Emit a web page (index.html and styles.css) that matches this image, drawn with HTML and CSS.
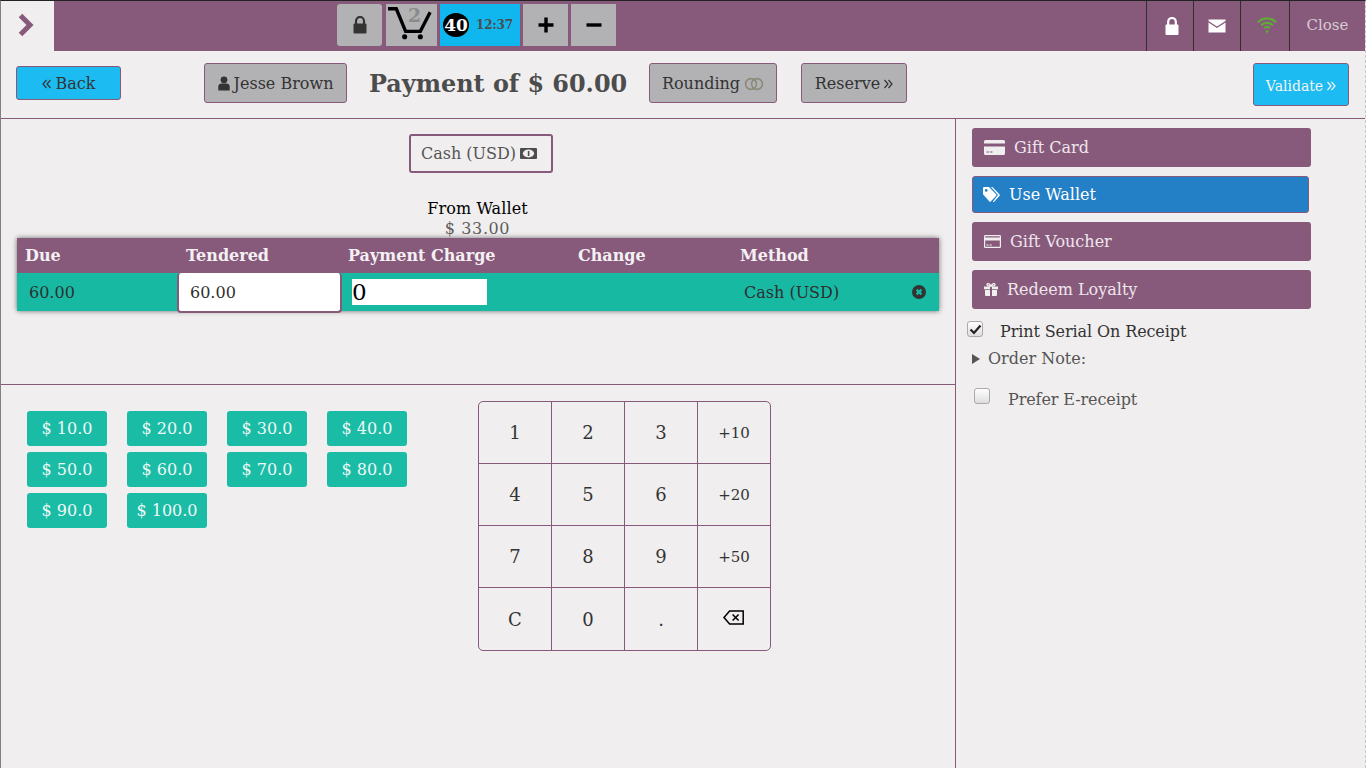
FILE: index.html
```html
<!DOCTYPE html>
<html lang="en">
<head>
<meta charset="UTF-8">
<title>Payment</title>
<link rel="stylesheet" href="styles.css">
</head>
<body>
<div class="screen">

  <!-- top bar -->
  <header class="topbar">
    <div class="menu-toggle">
      <svg width="18" height="26" viewBox="0 0 18 26"><path d="M3.5 3.5 L13 13 L3.5 22.5" fill="none" stroke="#875a7b" stroke-width="5"/></svg>
    </div>
    <div class="tools">
      <div class="tool tool-lock">
        <svg width="14" height="18" viewBox="0 0 14 18"><path d="M3 8V5a4 4 0 0 1 8 0v3" fill="none" stroke="#333" stroke-width="2.2"/><rect x="0.5" y="7.5" width="13" height="10" rx="1.2" fill="#333"/></svg>
      </div>
      <div class="tool tool-cart">
        <svg width="52" height="36" viewBox="0 0 52 36"><path d="M2 4.5H10.5L20 27.5H35L45 8" fill="none" stroke="#000" stroke-width="3.4"/><circle cx="19" cy="33" r="2.6"/><circle cx="35" cy="33" r="2.6"/></svg>
        <span class="cart-count">2</span>
      </div>
      <div class="tool tool-timer">
        <span class="badge">40</span>
        <span class="clock">12:37</span>
      </div>
      <div class="tool tool-step">
        <svg width="16" height="16" viewBox="0 0 16 16"><path d="M0.5 8H15.5M8 0.5V15.5" stroke="#000" stroke-width="3.4"/></svg>
      </div>
      <div class="tool tool-step">
        <svg width="16" height="16" viewBox="0 0 16 16"><path d="M0.5 8H15.5" stroke="#000" stroke-width="3.4"/></svg>
      </div>
    </div>
    <div class="status">
      <div class="status-item status-lock">
        <svg width="14" height="18" viewBox="0 0 14 18"><path d="M3.2 8V4.8a3.8 3.8 0 0 1 7.6 0V8" fill="none" stroke="#fff" stroke-width="2.2"/><rect x="0.5" y="7.5" width="13" height="10.5" rx="1" fill="#fff"/></svg>
      </div>
      <div class="status-item">
        <svg width="18" height="14" viewBox="0 0 18 14"><path d="M0.5 0.5H17.5V2L9 7.5L0.5 2Z" fill="#fff"/><path d="M0.5 3.6L9 9L17.5 3.6V13.5H0.5Z" fill="#fff"/></svg>
      </div>
      <div class="status-item status-wifi">
        <svg width="22" height="18" viewBox="0 0 18 16" fill="none" stroke="#5eab3a" stroke-width="2"><path d="M1 5.5C5.5 1 12.5 1 17 5.5"/><path d="M3.8 8.2C6.8 5.4 11.2 5.4 14.2 8.2"/><path d="M6.5 10.8C8 9.5 10 9.5 11.5 10.8"/><path d="M9 15.5L7.4 13.1C8.4 12.5 9.6 12.5 10.6 13.1Z" fill="#5eab3a" stroke="none"/></svg>
      </div>
      <div class="status-item status-close">Close</div>
    </div>
  </header>

  <!-- action row -->
  <div class="actions">
    <button class="btn btn-blue btn-back">
      <svg class="angles" width="9" height="10" viewBox="0 0 9 10"><path d="M4.5 1L1 5L4.5 9M8.5 1L5 5L8.5 9" fill="none" stroke="#333" stroke-width="1.2"/></svg>Back
    </button>
    <button class="btn btn-grey btn-customer">
      <svg width="12" height="15" viewBox="0 0 12 15"><circle cx="6" cy="3.8" r="3.4" fill="#333"/><path d="M0.3 14.5V10.5C0.3 8.6 1.8 7.4 3.4 7.4H8.6C10.2 7.4 11.7 8.6 11.7 10.5V14.5Z" fill="#333"/></svg>Jesse Brown
    </button>
    <h1 class="title">Payment of $ 60.00</h1>
    <button class="btn btn-grey btn-rounding">Rounding
      <svg width="20" height="14" viewBox="0 0 20 14" fill="none" stroke="#8a8a78" stroke-width="1.6"><circle cx="7" cy="7" r="5.4"/><circle cx="13" cy="7" r="5.4"/></svg>
    </button>
    <button class="btn btn-grey btn-reserve">Reserve
      <svg class="angles-right" width="9" height="10" viewBox="0 0 9 10"><path d="M0.5 1L4 5L0.5 9M4.5 1L8 5L4.5 9" fill="none" stroke="#333" stroke-width="1.2"/></svg>
    </button>
    <button class="btn btn-blue btn-validate">Validate
      <svg class="angles-right" width="9" height="10" viewBox="0 0 9 10"><path d="M0.5 1L4 5L0.5 9M4.5 1L8 5L4.5 9" fill="none" stroke="#f4f4f4" stroke-width="1.2"/></svg>
    </button>
  </div>

  <div class="content">
    <main class="left">
      <section class="lines">
        <div class="method-row">
          <div class="method">Cash (USD)
            <svg width="17" height="11" viewBox="0 0 17 11"><rect width="17" height="11" rx="1" fill="#4d4d4d"/><ellipse cx="8.5" cy="5.5" rx="5.6" ry="3.9" fill="#f0eeee"/><rect x="7.8" y="3" width="1.6" height="5" fill="#4d4d4d"/></svg>
          </div>
        </div>
        <div class="wallet">
          <div class="wallet-label">From Wallet</div>
          <div class="wallet-value">$ 33.00</div>
        </div>
        <div class="paylines">
          <div class="paylines-head">
            <span class="col-due">Due</span>
            <span class="col-tendered">Tendered</span>
            <span class="col-charge">Payment Charge</span>
            <span class="col-change">Change</span>
            <span class="col-method">Method</span>
          </div>
          <div class="paylines-row">
            <span class="cell-due">60.00</span>
            <span class="cell-tendered">60.00</span>
            <span class="cell-charge"><span class="charge-input">0</span></span>
            <span class="cell-change"></span>
            <span class="cell-method">Cash (USD)</span>
            <svg class="remove" width="14" height="14" viewBox="0 0 14 14"><circle cx="7" cy="7" r="7" fill="#333"/><path d="M4.6 4.6L9.4 9.4M9.4 4.6L4.6 9.4" stroke="#17b9a3" stroke-width="2.2"/></svg>
          </div>
        </div>
      </section>

      <section class="pad-area">
        <div class="quick">
          <button class="quick-btn">$ 10.0</button>
          <button class="quick-btn">$ 20.0</button>
          <button class="quick-btn">$ 30.0</button>
          <button class="quick-btn">$ 40.0</button>
          <button class="quick-btn">$ 50.0</button>
          <button class="quick-btn">$ 60.0</button>
          <button class="quick-btn">$ 70.0</button>
          <button class="quick-btn">$ 80.0</button>
          <button class="quick-btn">$ 90.0</button>
          <button class="quick-btn">$ 100.0</button>
        </div>
        <div class="numpad">
          <div class="key">1</div><div class="key">2</div><div class="key">3</div><div class="key key-add">+10</div>
          <div class="key">4</div><div class="key">5</div><div class="key">6</div><div class="key key-add">+20</div>
          <div class="key">7</div><div class="key">8</div><div class="key">9</div><div class="key key-add">+50</div>
          <div class="key">C</div><div class="key">0</div><div class="key">.</div>
          <div class="key">
            <svg class="backspace" width="21" height="15" viewBox="0 0 21 15" fill="none" stroke="#000" stroke-width="1.5"><path d="M20.2 1H6.6L1 7.5L6.6 14H20.2Z"/><path d="M9.6 4.4L15.6 10.6M15.6 4.4L9.6 10.6"/></svg>
          </div>
        </div>
      </section>
    </main>

    <aside class="right">
      <div class="side-btn">
        <svg class="icon-gift" width="21" height="15" viewBox="0 0 21 15"><path d="M1.5 0H19.5A1.5 1.5 0 0 1 21 1.5V3.5H0V1.5A1.5 1.5 0 0 1 1.5 0Z" fill="#f0eeee"/><path d="M0 6.5H21V13.5A1.5 1.5 0 0 1 19.5 15H1.5A1.5 1.5 0 0 1 0 13.5ZM2.5 11.5V12.5H5V11.5ZM6 11.5V12.5H8.5V11.5Z" fill="#f0eeee" fill-rule="evenodd"/></svg>
        Gift Card
      </div>
      <div class="side-btn side-btn-active">
        <svg class="icon-tag" width="17" height="16" viewBox="0 0 17 16"><path d="M0 1.2A1.2 1.2 0 0 1 1.2 0H6L13 7.2A1.2 1.2 0 0 1 13 9L8 14.2A1.2 1.2 0 0 1 6.2 14.2L0 7.2ZM3.2 2A1.4 1.4 0 1 0 3.2 4.8A1.4 1.4 0 1 0 3.2 2Z" fill="#fff" fill-rule="evenodd"/><path d="M8 0H9.4L16.4 7.2A1.2 1.2 0 0 1 16.4 9L11.4 14.4A1.2 1.2 0 0 1 9.8 14.8L15 8.1Z" fill="#fff"/></svg>
        Use Wallet
      </div>
      <div class="side-btn">
        <svg class="icon-voucher" width="17" height="13" viewBox="0 0 17 13"><path d="M1.3 0H15.7A1.3 1.3 0 0 1 17 1.3V11.7A1.3 1.3 0 0 1 15.7 13H1.3A1.3 1.3 0 0 1 0 11.7V1.3A1.3 1.3 0 0 1 1.3 0ZM1.2 1.2V2.6H15.8V1.2ZM1.2 5.4V11.8H15.8V5.4ZM2.4 9.6H4.6V10.6H2.4ZM5.6 9.6H7.8V10.6H5.6Z" fill="#f0eeee" fill-rule="evenodd"/></svg>
        Gift Voucher
      </div>
      <div class="side-btn">
        <svg class="icon-present" width="14" height="13" viewBox="0 0 14 13"><path d="M0 3.4H6V6.2H0ZM8 3.4H14V6.2H8ZM1 7H6V13H2A1 1 0 0 1 1 12ZM8 7H13V12A1 1 0 0 1 12 13H8Z" fill="#f0eeee"/><path d="M7 3C5.5 3 3 3 3 1.5C3 0 5.5 0 7 3C8.5 0 11 0 11 1.5C11 3 8.5 3 7 3Z" fill="none" stroke="#f0eeee" stroke-width="1.3"/></svg>
        Redeem Loyalty
      </div>

      <div class="check-row check-serial">
        <span class="checkbox">
          <svg width="13" height="11" viewBox="0 0 13 11"><path d="M1.5 5.5L5 9L11.5 1.5" fill="none" stroke="#222" stroke-width="2.2"/></svg>
        </span>
        <span class="serial-label">Print Serial On Receipt</span>
      </div>
      <div class="order-note"><span class="caret"></span>Order Note:</div>
      <div class="check-row check-ereceipt">
        <span class="checkbox"></span>
        <span class="ereceipt-label">Prefer E-receipt</span>
      </div>
    </aside>
  </div>

</div>
</body>
</html>
```

FILE: styles.css
```css
/* base */
html, body {
  margin: 0;
  padding: 0;
  height: 100%;
  overflow: hidden;
}

body {
  font-family: "DejaVu Serif", serif;
  font-size: 16px;
  color: #4c4c4c;
  background-color: #f0eeee;
}

.screen {
  width: 1366px;
  height: 768px;
  box-sizing: border-box;
  display: flex;
  flex-direction: column;
  border-top: 1px solid #222;
  border-left: 1px solid #808080;
  border-right: 1px dashed #c8c8c8;
}

button {
  font-family: "DejaVu Serif", serif;
  cursor: pointer;
}

/* top bar */
.topbar {
  height: 50px;
  flex: none;
  display: flex;
  background-color: #875a7b;
}

.menu-toggle {
  width: 53px;
  display: flex;
  align-items: center;
  padding-left: 16px;
  box-sizing: border-box;
  background-color: #f0eeee;
  padding-bottom: 3px;
}

.tools {
  display: flex;
  margin-left: 283px;
  padding-top: 3px;
  height: 42px;
}

.tool {
  height: 42px;
  display: flex;
  align-items: center;
  justify-content: center;
  background-color: #b2b2b5;
}

.tool-lock {
  width: 45px;
  border-radius: 3px;
  margin-right: 4px;
}

.tool-cart {
  width: 51px;
  position: relative;
  margin-right: 3px;
  align-items: flex-start;
}

.cart-count {
  position: absolute;
  top: 0;
  left: 22px;
  font-size: 19px;
  font-weight: bold;
  color: #8b8b8b;
}

.tool-timer {
  width: 80px;
  margin-right: 3px;
  justify-content: flex-start;
  background-color: #10b7ef;
}

.badge {
  width: 26px;
  height: 24px;
  margin-left: 3px;
  border-radius: 50%;
  background-color: #000;
  color: #fff;
  font-size: 17px;
  font-weight: bold;
  line-height: 24px;
  text-align: center;
}

.clock {
  margin-left: 7px;
  font-size: 12px;
  letter-spacing: -0.2px;
  font-weight: bold;
  color: #4c4c4c;
}

.tool-step {
  width: 45px;
  margin-right: 3px;
}

.status {
  margin-left: auto;
  display: flex;
}

.status-item {
  width: 46px;
  display: flex;
  align-items: center;
  justify-content: center;
  border-left: 1px solid #2f2f2f;
  padding-bottom: 1px;
}

.status-lock svg {
  margin-left: 3px;
}

.status-wifi {
  width: 48px;
}

.status-wifi svg {
  margin-left: 3px;
  margin-bottom: 2px;
}

.status-close {
  width: 75px;
  padding-bottom: 3px;
  font-size: 15px;
  color: #d6cdd4;
}

/* action row */
.actions {
  height: 63px;
  padding-bottom: 4px;
  flex: none;
  display: flex;
  align-items: center;
  border-bottom: 1px solid #875a7b;
}

.btn {
  box-sizing: border-box;
  height: 40px;
  padding: 2px 0 0;
  border: 1px solid #875a7b;
  border-radius: 3px;
  font-size: 16px;
  color: #333;
  display: flex;
  align-items: center;
  justify-content: center;
  white-space: nowrap;
}

.btn-blue {
  background-color: #1cbcf2;
}

.btn-grey {
  background-color: #b2b2b5;
}

.angles {
  margin-right: 5px;
}

.angles-right {
  margin-left: 4px;
}

.btn-back {
  width: 105px;
  height: 34px;
  margin-left: 15px;
}

.btn-customer {
  width: 143px;
  margin-left: 83px;
}

.btn-customer svg {
  margin-right: 4px;
}

.title {
  margin: 2px 0 0 22px;
  width: 280px;
  font-size: 23.9px;
  font-weight: bold;
  white-space: nowrap;
  color: #4c4c4c;
}

.btn-rounding {
  width: 128px;
}

.btn-rounding svg {
  margin-left: 4px;
}

.btn-reserve {
  width: 106px;
  margin-left: 24px;
}

.btn-validate {
  width: 96px;
  height: 43px;
  margin-left: auto;
  margin-right: 16px;
  margin-top: 4px;
  font-size: 14px;
  color: #f4f4f4;
}

/* main area */
.content {
  flex: 1;
  display: flex;
  min-height: 0;
}

.left {
  width: 954px;
  flex: none;
  display: flex;
  flex-direction: column;
}

.lines {
  height: 266px;
  flex: none;
  box-sizing: border-box;
  border-bottom: 1px solid #875a7b;
  padding: 15px 15px 0 16px;
}

.method-row {
  display: flex;
  justify-content: center;
  padding-left: 4px;
}

.method {
  box-sizing: border-box;
  width: 144px;
  height: 39px;
  border: 2px solid #875a7b;
  border-radius: 3px;
  padding-right: 3px;
  display: flex;
  align-items: center;
  justify-content: center;
  gap: 4px;
  color: #555;
}

.wallet {
  margin-top: 26px;
  text-align: center;
  padding-right: 2px;
  line-height: 20px;
  height: 39px;
}

.wallet-label {
  color: #000;
  letter-spacing: 0.1px;
}

.wallet-value {
  color: #5c5c5c;
  letter-spacing: 0.6px;
}

.paylines {
  width: 922px;
  box-shadow: 0 0 5px rgba(0, 0, 0, 0.55);
}

.paylines-head {
  height: 35px;
  display: flex;
  align-items: center;
  background-color: #875a7b;
  color: #f4f0f3;
  font-weight: bold;
}

.col-due {
  width: 161px;
  padding-left: 8px;
}

.col-tendered {
  width: 162px;
}

.col-charge {
  width: 230px;
}

.col-change {
  width: 162px;
}

.paylines-row {
  height: 38px;
  display: flex;
  align-items: center;
  position: relative;
  background-color: #17b9a3;
  color: #2f2f2f;
}

.cell-due {
  width: 148px;
  padding-left: 12px;
}

.cell-tendered {
  box-sizing: border-box;
  width: 165px;
  height: 40px;
  padding-left: 11px;
  display: flex;
  align-items: center;
  align-self: flex-start;
  background-color: #fff;
  border: 2px solid #875a7b;
  border-top: none;
  border-radius: 4px;
}

.cell-charge {
  width: 237px;
  padding-left: 7px;
  box-sizing: border-box;
  margin-left: 3px;
}

.charge-input {
  display: block;
  width: 135px;
  height: 26px;
  background-color: #fff;
  color: #000;
  font-size: 23px;
  line-height: 26px;
}

.cell-change {
  width: 159px;
}

.cell-method {
  margin-left: 3px;
}

.remove {
  position: absolute;
  right: 13px;
  top: 12px;
}

/* quick amounts and keypad */
.pad-area {
  flex: 1;
  display: flex;
  align-items: flex-start;
}

.quick {
  width: 400px;
  margin: 26px 0 0 26px;
  display: grid;
  grid-template-columns: repeat(4, 80px);
  grid-auto-rows: 35px;
  column-gap: 20px;
  row-gap: 6px;
}

.quick-btn {
  padding: 0;
  border: none;
  border-radius: 3px;
  background-color: #1abca6;
  color: #f0f8f6;
  font-size: 16px;
}

.numpad {
  box-sizing: border-box;
  width: 293px;
  height: 250px;
  margin: 16px 0 0 51px;
  display: grid;
  grid-template-columns: 73px 73px 73px 72px;
  grid-template-rows: 62px 62px 62px 62px;
  border: 1px solid #875a7b;
  border-radius: 5px;
  overflow: hidden;
}

.key {
  display: flex;
  align-items: center;
  justify-content: center;
  font-size: 18px;
  color: #333;
  border-right: 1px solid #875a7b;
  border-bottom: 1px solid #875a7b;
}

.key:nth-child(4n) {
  border-right: none;
}

.key:nth-child(n+13) {
  border-bottom: none;
}

.key-add {
  font-size: 15px;
}

.backspace {
  margin: 0 2px 4px 0;
}

/* right column */
.right {
  flex: 1;
  box-sizing: border-box;
  border-left: 1px solid #875a7b;
  padding: 9px 0 0 16px;
}

.side-btn {
  box-sizing: border-box;
  width: 339px;
  height: 39px;
  margin-bottom: 9px;
  padding-left: 12px;
  display: flex;
  align-items: center;
  border-radius: 3px;
  background-color: #875a7b;
  color: #efe6ec;
}

.side-btn-active {
  width: 337px;
  height: 37px;
  padding-left: 10px;
  border: 1px solid #875a7b;
  background-color: #2480c6;
  color: #fff;
}

.icon-gift {
  margin-right: 9px;
}

.icon-tag {
  margin-right: 9px;
}

.icon-voucher {
  margin-right: 9px;
}

.icon-present {
  margin-right: 9px;
}

.check-row {
  display: flex;
  align-items: center;
}

.checkbox {
  box-sizing: border-box;
  width: 16px;
  height: 16px;
  flex: none;
  display: flex;
  align-items: center;
  justify-content: center;
  border: 1px solid #aaa;
  border-radius: 3px;
  background: linear-gradient(#fff, #dedede);
}

.check-serial {
  margin: -1px 0 0 -5px;
  height: 28px;
}

.check-serial .checkbox {
  margin-top: -4px;
}

.serial-label {
  margin-left: 17px;
  color: #333;
  letter-spacing: -0.1px;
}

.order-note {
  margin-top: 2px;
  height: 24px;
  line-height: 24px;
  display: flex;
  align-items: center;
  color: #555;
}

.caret {
  width: 0;
  height: 0;
  margin-right: 8px;
  border-left: 8px solid #555;
  border-top: 5px solid transparent;
  border-bottom: 5px solid transparent;
}

.check-ereceipt {
  margin: 16px 0 0 2px;
  height: 24px;
}

.check-ereceipt .checkbox {
  margin-top: -6px;
}

.ereceipt-label {
  margin-left: 18px;
  color: #555;
  letter-spacing: -0.1px;
}
```
